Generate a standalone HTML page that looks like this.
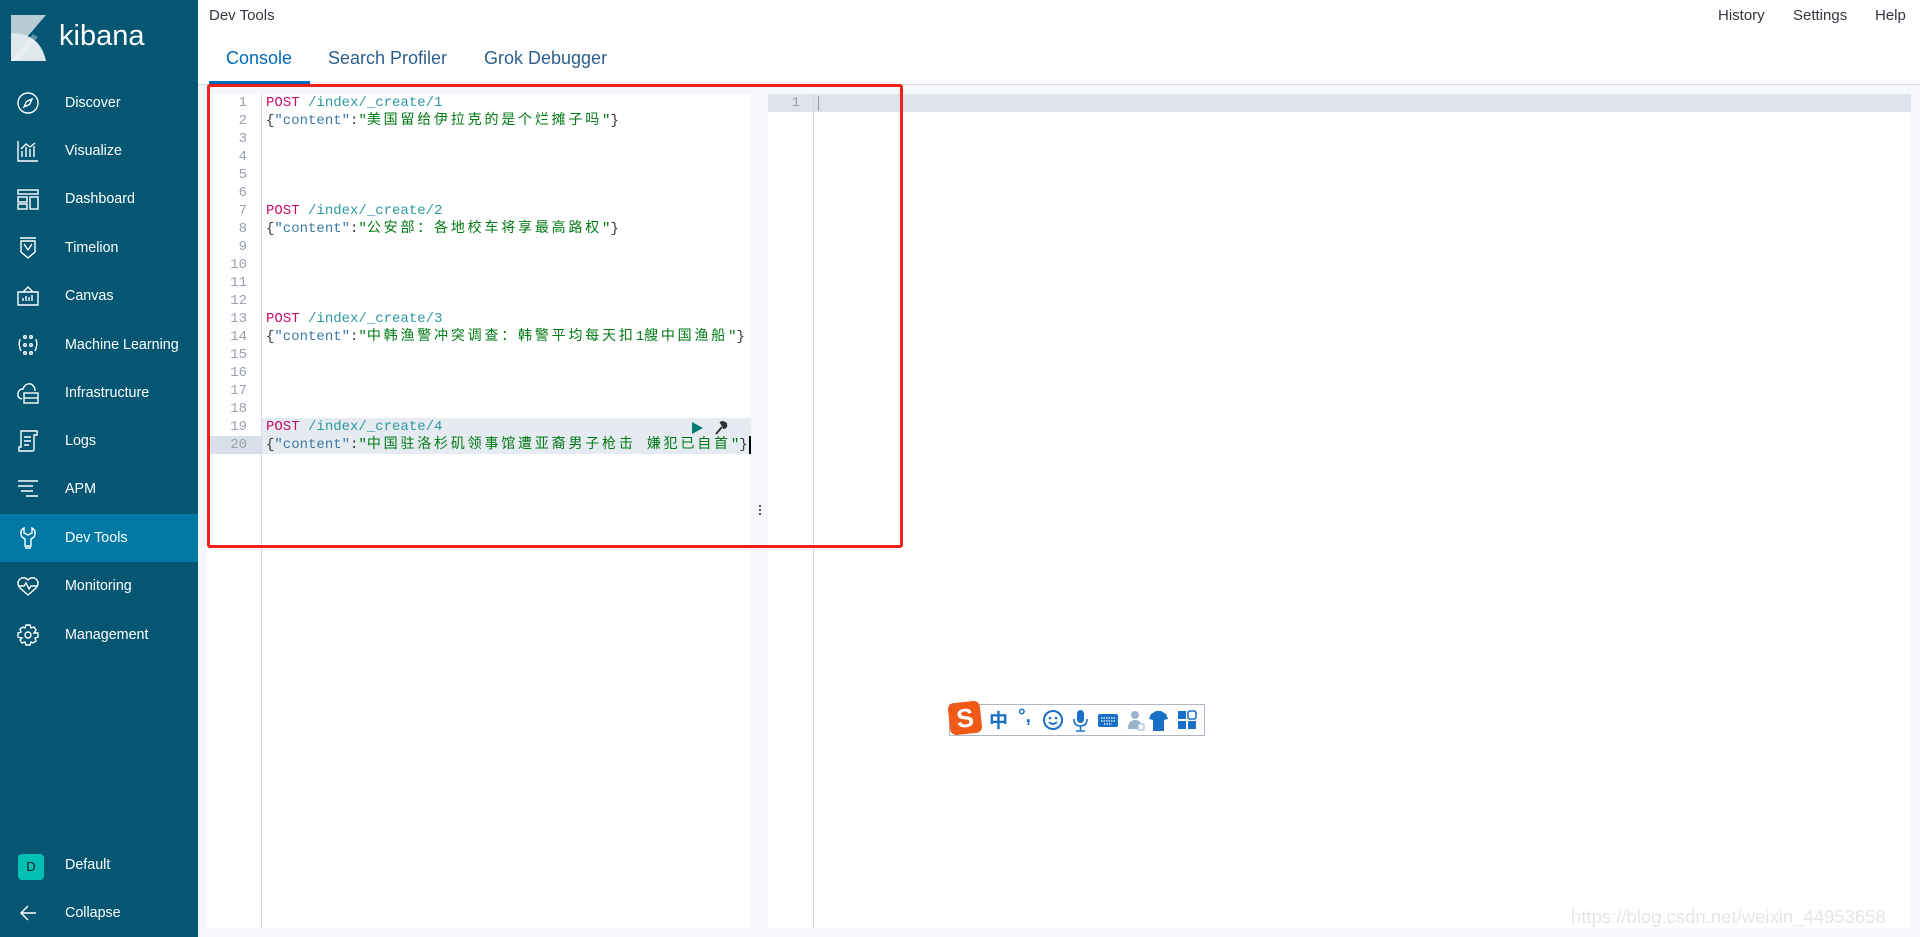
<!DOCTYPE html>
<html><head><meta charset="utf-8"><style>
*{margin:0;padding:0;box-sizing:border-box}
body{width:1920px;height:937px;overflow:hidden;background:#fff;font-family:"Liberation Sans","Noto Sans CJK SC",sans-serif;position:relative}
.side{position:absolute;left:0;top:0;width:198px;height:937px;background:#045672;color:#fff}
.item{position:absolute;left:0;width:198px;height:48px;font-size:14.3px;line-height:48px}
.item span{position:absolute;left:65px}
.item svg{position:absolute;left:16px;top:12px}
.active{background:#0079a5}
.top{position:absolute;font-size:15px;color:#343741;top:7px}
.tab{position:absolute;top:48px;font-size:18px;color:#2d5e8c}
.ed{position:absolute;font-family:"Liberation Mono","Noto Sans CJK SC",monospace;font-size:14px}
.ln{position:absolute;height:18px;line-height:18px;white-space:pre}
.num{position:absolute;width:40px;text-align:right;color:#9aa1ad;font-size:14px;height:18px;line-height:18px;font-family:"Liberation Mono",monospace}
.p{color:#c80a68}.u{color:#2b9aa0}.k{color:#3b7aa5}.s{color:#007a14}.b{color:#333}
.c{font-size:14px;letter-spacing:2.8px}
</style></head><body>
<div class="side">
<svg style="position:absolute;left:0;top:0" width="60" height="70"><polygon points="11,15 46,15 28,36 11,36" fill="#b7cbd3"/><path d="M11,33 Q40,33 46,61 H11 Z" fill="#dfe9ec"/><path d="M11,61 L33,34 L38,37 L18,61Z" fill="#fff" opacity=".35"/></svg>
<div style="position:absolute;left:59px;top:20px;font-size:29px;color:#fff">kibana</div>
<div class="item" style="top:79px"><svg width="24" height="24" fill="none" stroke="#fff" stroke-width="1.4"><circle cx="12" cy="12" r="10"/><path d="M8 16 L10.5 10.5 16 8 13.5 13.5Z"/></svg><span>Discover</span></div>
<div class="item" style="top:127px"><svg width="24" height="24" fill="none" stroke="#fff" stroke-width="1.4"><path d="M2 2V22H22M6 18V12M10 18V8M14 18V10M18 18V7M5 10L10 5 14 8 19 4"/></svg><span>Visualize</span></div>
<div class="item" style="top:175px"><svg width="24" height="24" fill="none" stroke="#fff" stroke-width="1.4"><rect x="2" y="3" width="20" height="4"/><rect x="2" y="10" width="9" height="5"/><rect x="2" y="17" width="9" height="5"/><rect x="14" y="10" width="8" height="12"/></svg><span>Dashboard</span></div>
<div class="item" style="top:224px"><svg width="24" height="24" fill="none" stroke="#fff" stroke-width="1.4"><path d="M4 2H20M5 5H19V16L12 22 5 16Z M8 8L12 14 16 8"/></svg><span>Timelion</span></div>
<div class="item" style="top:272px"><svg width="24" height="24" fill="none" stroke="#fff" stroke-width="1.4"><path d="M2 8H22V21H2Z M7 8L12 3 17 8M7 17V14M10 17V12M13 17V13M16 17V11"/></svg><span>Canvas</span></div>
<div class="item" style="top:321px"><svg width="24" height="24" fill="none" stroke="#fff" stroke-width="1.4"><circle cx="9" cy="4" r="1.3"/><circle cx="15" cy="4" r="1.3"/><circle cx="9" cy="12" r="1.3"/><circle cx="15" cy="12" r="1.3"/><circle cx="9" cy="20" r="1.3"/><circle cx="15" cy="20" r="1.3"/><path d="M4 6Q2 12 5 18M20 6Q22 12 19 18"/></svg><span>Machine Learning</span></div>
<div class="item" style="top:369px"><svg width="24" height="24" fill="none" stroke="#fff" stroke-width="1.4"><path d="M6 18Q1 17 2 12 3 8 7 8 9 2 15 3 19 5 19 10"/><rect x="8" y="12" width="14" height="10"/><path d="M8 17H22"/></svg><span>Infrastructure</span></div>
<div class="item" style="top:417px"><svg width="24" height="24" fill="none" stroke="#fff" stroke-width="1.4"><path d="M5 2H21V6H18V20Q18 22 16 22H3V18H5Z M8 8H15M8 12H15M8 16H13"/></svg><span>Logs</span></div>
<div class="item" style="top:465px"><svg width="24" height="24" fill="none" stroke="#fff" stroke-width="1.4"><path d="M2 4H22M2 9H17M5 14H17M10 19H22"/></svg><span>APM</span></div>
<div class="item active" style="top:514px"><svg width="24" height="24" fill="none" stroke="#fff" stroke-width="1.4"><path d="M8 2Q3 5 6 11L9 13V20H15V13L18 11Q21 5 16 2V7L12 9 8 7Z M9 22H15"/></svg><span>Dev Tools</span></div>
<div class="item" style="top:562px"><svg width="24" height="24" fill="none" stroke="#fff" stroke-width="1.4"><path d="M12 21L4 14Q0 9 4 5 8 2 12 6 16 2 20 5 24 9 20 14Z M2 12H8L10 9 13 15 15 12H22"/></svg><span>Monitoring</span></div>
<div class="item" style="top:611px"><svg width="24" height="24" fill="none" stroke="#fff" stroke-width="1.4"><circle cx="12" cy="12" r="3"/><path d="M10 2H14L15 5 18 4 20 7 18 10 22 10V14L19 15 20 18 17 20 15 19 14 22H10L9 19 6 20 4 17 6 15 2 14V10L5 9 4 6 7 4 9 5Z"/></svg><span>Management</span></div>
<div class="item" style="top:841px"><div style="position:absolute;left:18px;top:13px;width:26px;height:26px;border-radius:4px;background:#00bfb3;color:#1a1c21;font-size:13px;line-height:26px;text-align:center">D</div><span>Default</span></div>
<div class="item" style="top:889px"><svg width="24" height="24" fill="none" stroke="#fff" stroke-width="1.4"><path d="M20 12H6M12 5L5 12 12 19"/></svg><span>Collapse</span></div>
</div>

<div class="top" style="left:209px">Dev Tools</div>
<div class="top" style="left:1718px">History</div>
<div class="top" style="left:1793px">Settings</div>
<div class="top" style="left:1875px">Help</div>
<div class="tab" style="left:226px;color:#006bb4">Console</div>
<div class="tab" style="left:328px">Search Profiler</div>
<div class="tab" style="left:484px">Grok Debugger</div>
<div style="position:absolute;left:209px;top:81px;width:101px;height:3px;background:#006bb4"></div>
<div style="position:absolute;left:198px;top:84px;width:1722px;height:853px;background:#f5f7fa;border-top:1px solid #d3dae6"></div>

<div style="position:absolute;left:207px;top:94px;width:544px;height:834px;background:#fff"></div>
<div style="position:absolute;left:261px;top:94px;width:1px;height:834px;background:#d3dae6"></div>
<div style="position:absolute;left:768px;top:94px;width:1143px;height:834px;background:#fff"></div>
<div style="position:absolute;left:768px;top:94px;width:1143px;height:18px;background:#dfe4ec"></div>
<div style="position:absolute;left:813px;top:94px;width:1px;height:834px;background:#d3dae6"></div>
<div style="position:absolute;left:818px;top:96px;width:1px;height:15px;background:#999"></div>
<div class="num" style="left:768px;top:94px;width:44px;padding-right:12px">1</div>

<div style="position:absolute;left:262px;top:418px;width:489px;height:36px;background:#e6eaf1"></div>
<div style="position:absolute;left:207px;top:436px;width:54px;height:18px;background:#dae0e9"></div>
<div style="position:absolute;left:749px;top:436px;width:1.5px;height:18px;background:#000"></div>

<div class="ed" style="left:0;top:0">
<div class="num" style="left:207px;top:94px">1</div><div class="num" style="left:207px;top:112px">2</div><div class="num" style="left:207px;top:130px">3</div><div class="num" style="left:207px;top:148px">4</div><div class="num" style="left:207px;top:166px">5</div><div class="num" style="left:207px;top:184px">6</div><div class="num" style="left:207px;top:202px">7</div><div class="num" style="left:207px;top:220px">8</div><div class="num" style="left:207px;top:238px">9</div><div class="num" style="left:207px;top:256px">10</div><div class="num" style="left:207px;top:274px">11</div><div class="num" style="left:207px;top:292px">12</div><div class="num" style="left:207px;top:310px">13</div><div class="num" style="left:207px;top:328px">14</div><div class="num" style="left:207px;top:346px">15</div><div class="num" style="left:207px;top:364px">16</div><div class="num" style="left:207px;top:382px">17</div><div class="num" style="left:207px;top:400px">18</div><div class="num" style="left:207px;top:418px">19</div><div class="num" style="left:207px;top:436px">20</div>
<div class="ln" style="left:266px;top:94px"><span class="p">POST</span> <span class="u">/index/_create/1</span></div>
<div class="ln" style="left:266px;top:112px"><span class="b">{</span><span class="k">"content"</span><span class="b">:</span><span class="s">"<span class="c">美国留给伊拉克的是个烂摊子吗</span>"</span><span class="b">}</span></div>
<div class="ln" style="left:266px;top:202px"><span class="p">POST</span> <span class="u">/index/_create/2</span></div>
<div class="ln" style="left:266px;top:220px"><span class="b">{</span><span class="k">"content"</span><span class="b">:</span><span class="s">"<span class="c">公安部：各地校车将享最高路权</span>"</span><span class="b">}</span></div>
<div class="ln" style="left:266px;top:310px"><span class="p">POST</span> <span class="u">/index/_create/3</span></div>
<div class="ln" style="left:266px;top:328px"><span class="b">{</span><span class="k">"content"</span><span class="b">:</span><span class="s">"<span class="c">中韩渔警冲突调查：韩警平均每天扣</span>1<span class="c">艘中国渔船</span>"</span><span class="b">}</span></div>
<div class="ln" style="left:266px;top:418px"><span class="p">POST</span> <span class="u">/index/_create/4</span></div>
<div class="ln" style="left:266px;top:436px"><span class="b">{</span><span class="k">"content"</span><span class="b">:</span><span class="s">"<span class="c">中国驻洛杉矶领事馆遭亚裔男子枪击 嫌犯已自首</span>"</span><span class="b">}</span></div>
</div>
<svg style="position:absolute;left:690px;top:420px" width="40" height="16"><polygon points="2,2 13,8 2,14" fill="#017d73"/><path d="M26 14L32 7M30 3Q33 1 35 3L33 5 34 6 36 4Q37 8 33 8" stroke="#333" stroke-width="2" fill="#333"/></svg>
<div style="position:absolute;left:759px;top:505px;width:2px;height:2px;background:#555;box-shadow:0 4px #555,0 8px #555"></div>

<div style="position:absolute;left:207px;top:84px;width:696px;height:464px;border:3px solid #f0201b;border-radius:3px"></div>

<div style="position:absolute;left:949px;top:704px;width:256px;height:32px;background:#fff;border:1px solid #b0b6c2"></div>
<div style="position:absolute;left:949px;top:702px;width:32px;height:32px;background:#f05a18;border-radius:6px;transform:rotate(-6deg);color:#fff;font-weight:bold;font-size:26px;line-height:32px;text-align:center">S</div>
<div style="position:absolute;left:989px;top:708px;font-size:19px;color:#1a6fc7;font-weight:bold;font-family:'Noto Sans CJK SC',sans-serif;line-height:24px">中</div>
<div style="position:absolute;left:1018px;top:706px;font-size:19px;color:#1a6fc7;font-weight:bold">°,</div>
<svg style="position:absolute;left:1042px;top:709px" width="160" height="24"><circle cx="11" cy="11" r="9" fill="none" stroke="#1a6fc7" stroke-width="2"/><circle cx="8" cy="9" r="1.3" fill="#1a6fc7"/><circle cx="14" cy="9" r="1.3" fill="#1a6fc7"/><path d="M7 13Q11 17 15 13" stroke="#1a6fc7" stroke-width="1.6" fill="none"/><rect x="35" y="1" width="7" height="13" rx="3.5" fill="#1a6fc7"/><path d="M32 10Q32 17 38.5 17 45 17 45 10M38.5 17V22M34 22H43" stroke="#1a6fc7" stroke-width="1.6" fill="none"/><rect x="56" y="5" width="20" height="13" rx="2" fill="#1a6fc7"/><path d="M59 9H73M59 12H73M62 15H70" stroke="#fff" stroke-width="1.2" stroke-dasharray="1.5 1"/><circle cx="93" cy="6" r="4" fill="#9bb4cc"/><path d="M86 20Q86 11 93 11 99 11 99 16V20Z" fill="#9bb4cc"/><rect x="96" y="15" width="6" height="6" fill="#fff" stroke="#9bb4cc"/><path d="M109 5L114 2H119L124 5 126 10 122 11V22H111V11L107 10Z" fill="#1a6fc7"/><rect x="136" y="2" width="8" height="8" fill="#1a6fc7"/><rect x="146" y="2" width="8" height="8" rx="2" fill="none" stroke="#1a6fc7" stroke-width="1.6"/><rect x="136" y="12" width="8" height="8" fill="#1a6fc7"/><rect x="146" y="12" width="8" height="8" fill="#1a6fc7"/></svg>

<div style="position:absolute;left:1571px;top:906px;font-size:18.5px;color:#e4e6ea">https://blog.csdn.net/weixin_44953658</div>
</body></html>
